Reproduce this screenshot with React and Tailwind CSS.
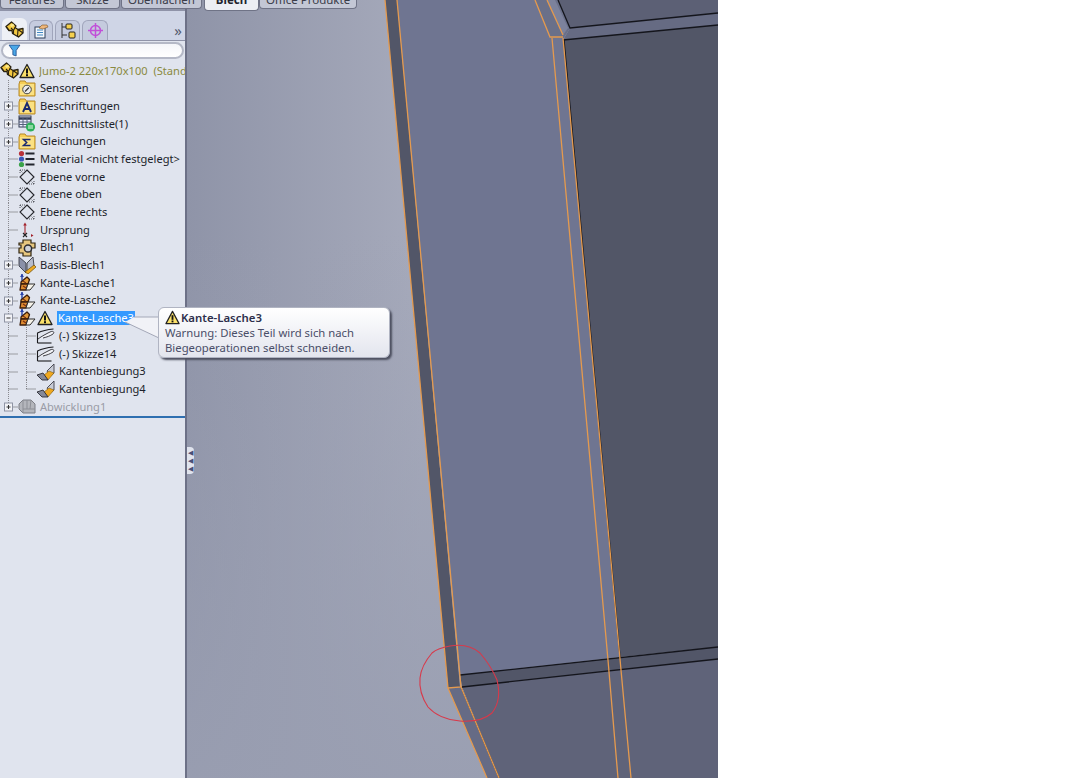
import React from "react";

const Warn = ({ size = 16 }) => (
  <svg width={size} height={size} viewBox="0 0 16 16" className="shrink-0">
    <path d="M8 1.500 15 14.500H1Z" fill="#fbe16a" stroke="#222" strokeWidth="1.300" strokeLinejoin="round" />
    <path d="M8 5.500v5" stroke="#111" strokeWidth="2" />
    <rect x="7" y="11.200" width="2" height="2" fill="#111" />
  </svg>
);

const PartIcon = () => (
  <svg width="19" height="17" viewBox="0 0 19 17" className="shrink-0">
    <path d="M1 5.500 6.500 1l4.500 4-1 1.500 3 2 5-1V12l-4.500 4-6-3.500-.5-3L4 9.500Z" fill="#f4c942" stroke="#2a2210" strokeWidth="1.300" strokeLinejoin="round" />
    <path d="M1 5.500 4 9.500M6 7l2.500 2.500V13M10 6.500 8.500 9.500M13 8.500 12.500 16M13 8.500l5 3.500" fill="none" stroke="#2a2210" strokeWidth="1.100" />
    <path d="M5 4l3-1.500 1.500 2-3 1.500Z" fill="#fbe88a" />
  </svg>
);

const Folder = ({ children }) => (
  <svg width="18" height="17" viewBox="0 0 18 17" className="shrink-0">
    <path d="M1 4 2 1h5l1.500 2H17v13H1Z" fill="#f7cf55" stroke="#b5882a" strokeWidth="1" />
    <rect x="2" y="4" width="14" height="11" fill="#fbe183" />
    {children}
  </svg>
);

const Sensor = () => (
  <Folder>
    <circle cx="9" cy="9.500" r="4.300" fill="#ececec" stroke="#444" />
    <path d="M7 11.500l4-4" stroke="#333" strokeWidth="1.200" />
  </Folder>
);

const LetterA = () => (
  <Folder>
    <path d="M5 14 9 5l4 9M6.800 11h4.400" fill="none" stroke="#1a2a70" strokeWidth="1.900" />
  </Folder>
);

const Sigma = () => (
  <Folder>
    <path d="M12.500 6.500h-7l3.200 3-3.200 3h7" fill="none" stroke="#1a2a70" strokeWidth="1.500" />
  </Folder>
);

const CutList = () => (
  <svg width="18" height="17" viewBox="0 0 18 17" className="shrink-0">
    <rect x="1" y="1" width="12" height="11" fill="#eef" stroke="#333c55" />
    <path d="M1 3.500h12" stroke="#333c55" strokeWidth="2.500" />
    <path d="M1 7h12M1 9.500h12M5 3v9M9 3v9" stroke="#55607a" />
    <circle cx="12.500" cy="12" r="4.600" fill="#2eb05a" />
    <path d="M10 11h5M10 13h5" stroke="#e8ffe8" />
  </svg>
);

const MaterialIcon = () => (
  <svg width="18" height="18" viewBox="0 0 18 18" className="shrink-0">
    <circle cx="3.500" cy="3.500" r="2.600" fill="#b8323a" />
    <circle cx="3.500" cy="9" r="2.600" fill="#3a56b8" />
    <circle cx="3.500" cy="14.500" r="2.600" fill="#3aa24a" />
    <path d="M7.500 3.500h9M7.500 9h9M7.500 14.500h9" stroke="#23262f" strokeWidth="1.800" />
  </svg>
);

const Plane = () => (
  <svg width="18" height="18" viewBox="0 0 18 18" className="shrink-0">
    <path d="M9 2 16 9l-7 7L2 9Z" fill="none" stroke="#25262c" strokeWidth="1.100" />
    <path d="M2 2h5M2 2v4M16 16h-5M16 16v-4" stroke="#44454c" strokeDasharray="1 1" strokeWidth="0.900" />
    <path d="M2 2 6 6M16 16l-4-4" stroke="#44454c" strokeDasharray="1 1" strokeWidth="0.900" />
  </svg>
);

const Origin = () => (
  <svg width="18" height="18" viewBox="0 0 18 18" className="shrink-0">
    <path d="M7 14V3" stroke="#a3232c" strokeWidth="1.100" />
    <path d="M5.200 4.500 7 1.500l1.800 3Z" fill="#a3232c" />
    <path d="M5 12l4 4M9 12l-4 4" stroke="#222" strokeWidth="1.100" />
    <path d="M13 13l2.500 1.500-2.500 1.500Z" fill="#a3232c" />
  </svg>
);

const BlechIcon = () => (
  <svg width="18" height="18" viewBox="0 0 18 18" className="shrink-0">
    <path d="M1 4h4V1h8v3h4v5h-4v8H5v-3H1V9h2V6H1Z" fill="#e6c67e" stroke="#2e2410" strokeWidth="1.200" />
    <circle cx="10" cy="9.500" r="3.600" fill="#cfd2d8" stroke="#2c2c30" strokeWidth="1.500" />
  </svg>
);

const BaseFlange = () => (
  <svg width="18" height="18" viewBox="0 0 18 18" className="shrink-0">
    <path d="M1 1l7 6v10L1 10Z" fill="#8a90a8" stroke="#3a3c46" strokeWidth="0.900" />
    <path d="M15 1 9 7v10l7-7Z" fill="#b7bccb" stroke="#3a3c46" strokeWidth="0.900" />
    <path d="M7 16l9-7 2 2-8 7Z" fill="#eeaa22" stroke="#6a4a08" strokeWidth="0.700" />
  </svg>
);

const EdgeFlange = () => (
  <svg width="18" height="20" viewBox="0 0 18 20" className="shrink-0">
    <path d="M4 1v8" stroke="#2742a8" strokeWidth="1.400" />
    <path d="M2 4l2-3 2 3Z" fill="#2742a8" />
    <path d="M3 9l6-5 2.500 2.500L10 11H3Z" fill="#e39a3a" stroke="#3a1c0a" strokeWidth="1.300" strokeLinejoin="round" />
    <path d="M3 11h7l-2 6H2Z" fill="#dc8a30" stroke="#3a1c0a" strokeWidth="1.300" strokeLinejoin="round" />
    <path d="M10 11h7l-5 6H8Z" fill="#f6f3ea" stroke="#2e2e2e" strokeWidth="1" />
    <path d="M5 8l3 2M5 13l3 2" stroke="#7a2e12" strokeWidth="1.100" />
  </svg>
);

const Sketch = () => (
  <svg width="20" height="18" viewBox="0 0 20 18" className="shrink-0">
    <path d="M1.500 16V6c5-2.500 10-3.500 16-4" fill="none" stroke="#1a1a1e" strokeWidth="1.100" />
    <path d="M1.500 16h14" stroke="#1a1a1e" strokeWidth="1.100" />
    <path d="M2 12C6 9 10 7 14 5c3-1.500 5 0 3 2-3 2-6 3-10 4" fill="#f2f3f8" stroke="#2a2a30" strokeWidth="0.900" />
  </svg>
);

const EdgeBend = () => (
  <svg width="20" height="18" viewBox="0 0 20 18" className="shrink-0">
    <path d="M11 8l7-7v9l-4 3Z" fill="#c7cbd6" stroke="#3e3e48" strokeWidth="0.900" />
    <path d="M8 12l5-4 5 2-6 7Z" fill="#efa820" stroke="#6a4a08" strokeWidth="0.500" />
    <path d="M1 12l6-2 5 7H6Z" fill="#858998" stroke="#2c2c33" strokeWidth="0.900" />
  </svg>
);

const Flatten = () => (
  <svg width="18" height="16" viewBox="0 0 18 16" className="shrink-0">
    <path d="M1 5l4-4h8l4 4v9H5L1 10Z" fill="#b4b6bc" stroke="#7d7f86" />
    <path d="M5 1v13M9 1v9M13 1l-1 9M5 10h12" stroke="#8d8f96" />
  </svg>
);

// dotted tree guides and the +/- box in front of each row
const Gutter = ({ box, last }) => (
  <svg width="18" height="18" viewBox="0 0 18 18" className="shrink-0">
    <path d={last ? "M8.500 0V9" : "M8.500 0V18"} stroke="#8a8a90" strokeDasharray="1 1" />
    <path d="M8.500 9H18" stroke="#555" strokeDasharray="1 1" />
    {box && (
      <>
        <rect x="4.500" y="5" width="8" height="8" fill="#f1f2f6" stroke="#8e93a3" />
        <path d="M6.500 9h4" stroke="#333" />
        {box === "plus" && <path d="M8.500 7v4" stroke="#333" />}
      </>
    )}
  </svg>
);

const rows = [
  { label: "Sensoren", icon: <Sensor /> },
  { label: "Beschriftungen", icon: <LetterA />, box: "plus" },
  { label: "Zuschnittsliste(1)", icon: <CutList />, box: "plus" },
  { label: "Gleichungen", icon: <Sigma />, box: "plus" },
  { label: "Material <nicht festgelegt>", icon: <MaterialIcon /> },
  { label: "Ebene vorne", icon: <Plane /> },
  { label: "Ebene oben", icon: <Plane /> },
  { label: "Ebene rechts", icon: <Plane /> },
  { label: "Ursprung", icon: <Origin /> },
  { label: "Blech1", icon: <BlechIcon /> },
  { label: "Basis-Blech1", icon: <BaseFlange />, box: "plus" },
  { label: "Kante-Lasche1", icon: <EdgeFlange />, box: "plus" },
  { label: "Kante-Lasche2", icon: <EdgeFlange />, box: "plus" },
];

const children = [
  { label: "(-) Skizze13", icon: <Sketch /> },
  { label: "(-) Skizze14", icon: <Sketch /> },
  { label: "Kantenbiegung3", icon: <EdgeBend /> },
  { label: "Kantenbiegung4", icon: <EdgeBend /> },
];

const Row = ({ children: content }) => (
  <div className="flex h-[17.7px] items-center overflow-visible whitespace-nowrap">{content}</div>
);

const TreeRow = ({ label, icon, box }) => (
  <Row>
    <Gutter box={box} />
    <span className="flex w-[22px] shrink-0 justify-start">{icon}</span>
    <span>{label}</span>
  </Row>
);

const tabs = [
  { name: "Features", cls: "w-[64px]" },
  { name: "Skizze", cls: "ml-px w-[55px]" },
  { name: "Oberflächen", cls: "ml-px w-[81px]" },
  { name: "Blech", cls: "ml-[2px] w-[55px]", active: true },
  { name: "Office Produkte", cls: "w-[98px]" },
];

const Viewport = () => (
  <svg viewBox="187 0 531 778" className="absolute inset-0 h-full w-full">
    <defs>
      <linearGradient id="bgAcross" gradientUnits="userSpaceOnUse" x1="187" y1="0" x2="420" y2="0">
        <stop offset="0" stopColor="#8f94a8" />
        <stop offset="1" stopColor="#a6aabb" />
      </linearGradient>
      <linearGradient id="bgDown" x1="0" y1="0" x2="0" y2="1">
        <stop offset="0.3" stopColor="#999eb1" stopOpacity="0" />
        <stop offset="1" stopColor="#999eb1" stopOpacity="0.9" />
      </linearGradient>
    </defs>
    <rect x="187" y="0" width="531" height="778" fill="url(#bgAcross)" />
    <rect x="187" y="0" width="531" height="778" fill="url(#bgDown)" />
    {/* left dark strip */}
    <path d="M385 0H397L460 687 448 688Z" fill="#525668" />
    {/* main face */}
    <path d="M397 0H558L570 28 563 40 620 657 460 675Z" fill="#6f7591" />
    {/* chamfer at the top */}
    <path d="M535 0H558L570 28 563 38 550 37Z" fill="#6a7089" />
    <path d="M547 0H555L568 28 563 35Z" fill="#7c829c" />
    {/* top right faces */}
    <path d="M558 0H718V13L570 28Z" fill="#5c6075" />
    <path d="M570 28 718 13V25L563 40Z" fill="#666b83" />
    <path d="M563 40 718 25V647L620 657Z" fill="#525667" />
    {/* lower band and face */}
    <path d="M460 675 718 647V659L462 687Z" fill="#525668" />
    <path d="M462 687 718 659V778H499Z" fill="#5f6379" />
    <path d="M448 688 461 687 499 778H487Z" fill="#666b85" />
    {/* black edges */}
    <g fill="none" stroke="#14151c" strokeWidth="1.300">
      <path d="M558 0 570 28 718 13" />
      <path d="M563 40 718 25" />
      <path d="M564 40 620 657" />
      <path d="M460 675 718 647" />
      <path d="M462 687 718 659" />
      <path d="M461 687 499 778" strokeWidth="1" />
    </g>
    {/* orange selection outline */}
    <g fill="none" stroke="#e59a4e" strokeWidth="1.300">
      <path d="M385 0 448 688 461 687 397 0" />
      <path d="M448 688 487 778" />
      <path d="M461 687 499 778" />
      <path d="M535 0 550 37H563" />
      <path d="M547 0 563 35" />
      <path d="M552 38 608 660 618 778" />
      <path d="M563 38 621 670 631 778" />
    </g>
    {/* hand drawn circle */}
    <path
      d="M450 646C462 644 472 646 480 653 486 660 492 668 497 680 500 692 499 704 492 713 484 720 474 722 460 721 448 720 436 716 428 707 422 698 419 688 420 678 421 668 426 660 432 653 438 648 444 647 450 646Z"
      fill="none"
      stroke="#d8394a"
      strokeWidth="1.100"
    />
  </svg>
);

export default function App() {
  return (
    <div className="relative flex h-[778px] w-[1083px] overflow-hidden bg-white font-['Noto_Sans',sans-serif] text-[11.1px] text-[#1d1f2b]">
      {/* command manager tabs, cut off by the top edge */}
      <div className="absolute left-0 top-0 z-10 flex h-[12px] items-start text-[11.5px]">
        {tabs.map((t) => (
          <div
            key={t.name}
            className={`flex justify-center overflow-hidden rounded-b-sm border border-t-0 border-[#6f7386] leading-[11px] ${t.cls} ${
              t.active ? "h-[11px] bg-[#eceef3] font-bold text-[#20222c]" : "h-[9px] bg-[#c3c7d5] text-[#3a3c48]"
            }`}
          >
            <span className="-mt-[6px] block">{t.name}</span>
          </div>
        ))}
      </div>

      {/* feature manager */}
      <aside className="flex w-[187px] shrink-0 flex-col border-r-2 border-[#6d7187] bg-[#e0e4ee]">
        <div className="h-[10px] shrink-0 bg-[#9095a9]" />
        <div className="flex h-[31px] shrink-0 items-end gap-[2px] border-y border-[#8f93a8] bg-[#cfd5e6] pl-[2px]">
          <span className="flex h-[22px] w-[25px] items-center justify-center rounded-t-md bg-[#eef0f6]">
            <PartIcon />
          </span>
          <span className="flex h-[20px] w-[24px] items-center justify-center rounded-t-md border border-b-0 border-[#a0a5bb] bg-[#c5cbde]">
            <svg width="16" height="16" viewBox="0 0 16 16">
              <rect x="2" y="4" width="10" height="11" fill="#f4f8fc" stroke="#2d3f5a" />
              <path d="M4 7h6M4 9.500h6M4 12h6" stroke="#3f86c2" />
              <path d="M6 5l3-3h5l1 2-5 2Z" fill="#eeb67a" stroke="#7a5020" strokeWidth="0.600" />
            </svg>
          </span>
          <span className="flex h-[20px] w-[25px] items-center justify-center rounded-t-md border border-b-0 border-[#a0a5bb] bg-[#c5cbde]">
            <svg width="18" height="18" viewBox="0 0 18 18">
              <path d="M3 1v15M3 5h5M3 13h5" stroke="#333" />
              <rect x="7" y="2" width="6" height="5" rx="1" fill="#f5d04e" stroke="#222" />
              <rect x="10" y="10" width="6" height="6" rx="1" fill="#f5d04e" stroke="#222" />
            </svg>
          </span>
          <span className="flex h-[20px] w-[26px] items-center justify-center rounded-t-md border border-b-0 border-[#a0a5bb] bg-[#c5cbde]">
            <svg width="17" height="17" viewBox="0 0 17 17" fill="none" stroke="#c14fd8" strokeWidth="1.500">
              <circle cx="8.500" cy="8.500" r="5" />
              <path d="M8.500 1v15M1 8.500h15" />
            </svg>
          </span>
          <span className="mb-[2px] ml-auto mr-[3px] text-[15px] leading-[16px] text-[#555a6e]">»</span>
        </div>

        <div className="mx-px mt-px flex h-[17px] shrink-0 items-center rounded-full border-2 border-[#b4b8c6] bg-linear-to-b from-[#f4f5f9] to-white pl-[5px]">
          <svg width="13" height="13" viewBox="0 0 12 12">
            <path d="M1 1h10L7.500 6v5l-3-1V6Z" fill="#4aa8e8" stroke="#24508f" strokeWidth="0.800" />
          </svg>
        </div>

        <div className="mt-[3px] flex h-[17.7px] items-center whitespace-nowrap">
          <span className="flex w-[19px] shrink-0">
            <PartIcon />
          </span>
          <span className="mr-[4px] flex shrink-0">
            <Warn />
          </span>
          <span className="overflow-hidden text-[#8a8a3e]">Jumo-2 220x170x100&nbsp; (Standard)</span>
        </div>

        {rows.map((r) => (
          <TreeRow key={r.label} {...r} />
        ))}

        <Row>
          <Gutter box="minus" />
          <span className="flex w-[19px] shrink-0">
            <EdgeFlange />
          </span>
          <span className="mr-[4px] flex shrink-0">
            <Warn />
          </span>
          <span className="bg-[#3399ff] px-px leading-[14px] text-white">Kante-Lasche3</span>
        </Row>

        {children.map((c, i) => (
          <Row key={c.label}>
            <Gutter />
            <Gutter last={i === children.length - 1} />
            <span className="flex w-[23px] shrink-0">{c.icon}</span>
            <span>{c.label}</span>
          </Row>
        ))}

        <Row>
          <Gutter box="plus" last />
          <span className="flex w-[22px] shrink-0">
            <Flatten />
          </span>
          <span className="text-[#9a9ca6]">Abwicklung1</span>
        </Row>

        <div className="h-[2px] shrink-0 bg-[#2f6fb0]" />
      </aside>

      {/* graphics area */}
      <main className="relative w-[531px] shrink-0">
        <Viewport />
        {/* panel collapse handle */}
        <div className="absolute left-0 top-[447px] flex h-[27px] w-[7px] flex-col items-center justify-center gap-[1px] rounded-r-sm bg-[#e0e4ee] text-[7px] leading-[7px] text-[#4a4f78]">
          <span>◀</span>
          <span>◀</span>
          <span>◀</span>
        </div>
      </main>

      {/* tooltip */}
      <svg width="36" height="28" viewBox="0 0 36 28" className="absolute left-[124px] top-[314px] z-20">
        <path d="M10 3H35V24L1 8Z" fill="#f1f2f7" />
        <path d="M10 3H35M1 8 35 24" fill="none" stroke="#a4a8b8" />
      </svg>
      <div className="absolute left-[158px] top-[307px] z-20 h-[51px] w-[232px] rounded-[6px] border border-[#b0b4c2] bg-linear-to-b from-white to-[#e3e5ee] pl-[6px] pt-[1px] text-[#4a4e68] shadow-[2px_2px_2px_#4d5060]">
        <div className="flex h-[17px] items-center gap-px text-[11.4px] font-semibold text-[#2d2f4a]">
          <Warn size={15} />
          <span>Kante-Lasche3</span>
        </div>
        <p className="text-[11.3px] leading-[14.500px]">
          Warnung: Dieses Teil wird sich nach
          <br />
          Biegeoperationen selbst schneiden.
        </p>
      </div>
    </div>
  );
}
